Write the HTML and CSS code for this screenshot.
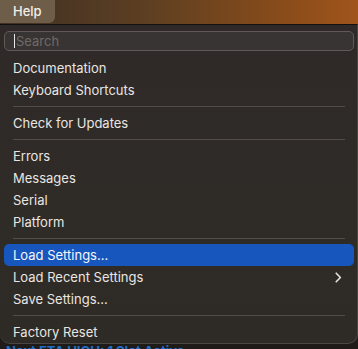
FILE: index.html
```html
<!DOCTYPE html>
<html lang="en">
<head>
  <meta charset="UTF-8" />
  <meta name="viewport" content="width=device-width, initial-scale=1.0" />
  <title>Help menu</title>
  <link rel="stylesheet" href="styles.css">
</head>
<body>
  <div class="menubar">
    <div class="menubar-item active">Help</div>
  </div>

  <div class="menu">
    <div class="search">
      <span class="caret"></span>
      <span class="placeholder">Search</span>
    </div>

    <div class="item">Documentation</div>
    <div class="item">Keyboard Shortcuts</div>
    <div class="sep"></div>
    <div class="item">Check for Updates</div>
    <div class="sep"></div>
    <div class="item">Errors</div>
    <div class="item">Messages</div>
    <div class="item">Serial</div>
    <div class="item">Platform</div>
    <div class="sep"></div>
    <div class="item selected">Load Settings...</div>
    <div class="item">
      Load Recent Settings
      <svg class="chevron" width="7" height="11" viewBox="0 0 7 11">
        <path d="M1.2 1.2 L5.4 5.5 L1.2 9.8" fill="none" stroke="#e6e3df" stroke-width="1.6" stroke-linecap="round" stroke-linejoin="round"/>
      </svg>
    </div>
    <div class="item">Save Settings...</div>
    <div class="sep"></div>
    <div class="item">Factory Reset</div>
  </div>

  <div class="behind">Next ETA HIGH: 1 Slot Active</div>
</body>
</html>
```

FILE: styles.css
```css
* {
  margin: 0;
  padding: 0;
  box-sizing: border-box;
}
body, html {
  height: 100%;
  overflow: hidden;
}
body {
  background: #1e1b19;
  font-family: 'Inter', 'Noto Sans', sans-serif;
  font-size: 13px;
  color: #e9e6e2;
  position: relative;
}
.menubar {
  height: 24px;
  display: flex;
  background: linear-gradient(90deg, #3e3024 0%, #5c3f22 40%, #8a4c1a 80%, #a0551a 100%);
}
.menubar-item {
  padding: 0 13px;
  height: 23px;
  line-height: 23px;
  font-weight: 500;
  color: #f3efe9;
}
.menubar-item.active {
  background: #6d5d49;
  border-radius: 0 0 6px 0;
}
.menu {
  position: relative;
  z-index: 2;
  height: 320px;
  width: 358px;
  background: linear-gradient(180deg, #2f2a28 0%, #2f2b27 60%, #2e2a25 100%);
  border-top: 1px solid #111;
  border-right: 1px solid #4a4641;
  border-bottom: 1px solid #4a4641;
  border-radius: 0 0 10px 10px;
  padding: 6px 3px 0 4px;
}
.search {
  height: 20px;
  border: 1px solid #5f5a57;
  border-radius: 5px;
  background: #383433;
  display: flex;
  align-items: center;
  padding-left: 9px;
  margin-bottom: 6px;
}
.caret {
  width: 1px;
  height: 14px;
  background: #e8e8e8;
  margin-right: 1px;
}
.placeholder {
  color: #6f6a66;
}
.item {
  height: 22px;
  line-height: 22px;
  padding-left: 9px;
  padding-right: 12px;
  border-radius: 5px;
  display: flex;
  align-items: center;
  justify-content: space-between;
}
.item.selected {
  background: #1756bd;
  color: #f4f6fb;
}
.sep {
  height: 1px;
  margin: 5px 9px 5px 9px;
  background: #514c47;
}
.chevron {
  display: block;
}
.behind {
  position: absolute;
  left: 6px;
  top: 343px;
  z-index: 1;
  color: #1d6fc9;
  font-weight: 700;
  font-size: 13px;
}
```
